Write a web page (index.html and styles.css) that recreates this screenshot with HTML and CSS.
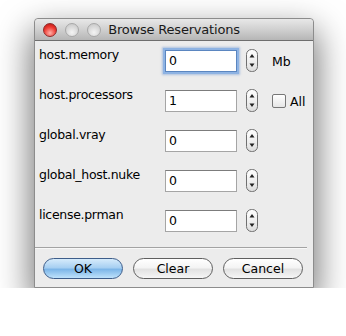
FILE: index.html
```html
<!DOCTYPE html>
<html lang="en">
<head>
    <meta charset="UTF-8">
    <meta name="viewport" content="width=device-width, initial-scale=1.0">
    <title>Browse Reservations</title>
    <link rel="stylesheet" href="styles.css">
</head>
<body>
    <div class="window">
        <div class="titlebar">
            <div class="lights">
                <span class="light light-close"></span>
                <span class="light"></span>
                <span class="light"></span>
            </div>
            <div class="title">Browse Reservations</div>
            <div></div>
        </div>

        <div class="content">
            <div class="row">
                <label class="name">host.memory</label>
                <input class="field field-focus" type="text" value="0">
                <span class="stepper">
                    <svg width="12" height="23" viewBox="0 0 12 23">
                        <defs>
                            <linearGradient id="stp" x1="0" y1="0" x2="0" y2="1">
                                <stop offset="0" stop-color="#ffffff"/>
                                <stop offset="0.5" stop-color="#f0f0f0"/>
                                <stop offset="1" stop-color="#dcdcdc"/>
                            </linearGradient>
                        </defs>
                        <rect x="0.5" y="0.5" width="11" height="22" rx="5" fill="url(#stp)" stroke="#6f6f6f"/>
                        <path d="M3.5 8.5 L6 5 L8.5 8.5 Z" fill="#222"/>
                        <path d="M3.5 14.5 L6 18 L8.5 14.5 Z" fill="#222"/>
                    </svg>
                </span>
                <span class="extra">Mb</span>
            </div>
            <div class="row">
                <label class="name">host.processors</label>
                <input class="field" type="text" value="1">
                <span class="stepper">
                    <svg width="12" height="23" viewBox="0 0 12 23">
                        <rect x="0.5" y="0.5" width="11" height="22" rx="5" fill="url(#stp)" stroke="#6f6f6f"/>
                        <path d="M3.5 8.5 L6 5 L8.5 8.5 Z" fill="#222"/>
                        <path d="M3.5 14.5 L6 18 L8.5 14.5 Z" fill="#222"/>
                    </svg>
                </span>
                <span class="extra"><span class="check"></span>All</span>
            </div>
            <div class="row">
                <label class="name">global.vray</label>
                <input class="field" type="text" value="0">
                <span class="stepper">
                    <svg width="12" height="23" viewBox="0 0 12 23">
                        <rect x="0.5" y="0.5" width="11" height="22" rx="5" fill="url(#stp)" stroke="#6f6f6f"/>
                        <path d="M3.5 8.5 L6 5 L8.5 8.5 Z" fill="#222"/>
                        <path d="M3.5 14.5 L6 18 L8.5 14.5 Z" fill="#222"/>
                    </svg>
                </span>
                <span class="extra"></span>
            </div>
            <div class="row">
                <label class="name">global_host.nuke</label>
                <input class="field" type="text" value="0">
                <span class="stepper">
                    <svg width="12" height="23" viewBox="0 0 12 23">
                        <rect x="0.5" y="0.5" width="11" height="22" rx="5" fill="url(#stp)" stroke="#6f6f6f"/>
                        <path d="M3.5 8.5 L6 5 L8.5 8.5 Z" fill="#222"/>
                        <path d="M3.5 14.5 L6 18 L8.5 14.5 Z" fill="#222"/>
                    </svg>
                </span>
                <span class="extra"></span>
            </div>
            <div class="row">
                <label class="name">license.prman</label>
                <input class="field" type="text" value="0">
                <span class="stepper">
                    <svg width="12" height="23" viewBox="0 0 12 23">
                        <rect x="0.5" y="0.5" width="11" height="22" rx="5" fill="url(#stp)" stroke="#6f6f6f"/>
                        <path d="M3.5 8.5 L6 5 L8.5 8.5 Z" fill="#222"/>
                        <path d="M3.5 14.5 L6 18 L8.5 14.5 Z" fill="#222"/>
                    </svg>
                </span>
                <span class="extra"></span>
            </div>
        </div>

        <div class="separator"></div>

        <div class="buttons">
            <button class="btn btn-default" type="button">OK</button>
            <button class="btn" type="button">Clear</button>
            <button class="btn" type="button">Cancel</button>
        </div>
    </div>
</body>
</html>
```

FILE: styles.css
```css
body {
    margin: 0;
    padding: 18px 0 0 34px;
    background: #ffffff;
    font-family: "DejaVu Sans", "Liberation Sans", sans-serif;
    font-size: 12px;
    color: #000;
}

.window {
    width: 278px;
    background: #ececec;
    border: 1px solid #8c8c8c;
    border-radius: 4px 4px 0 0;
    box-shadow: 0 15px 34px 3px rgba(0, 0, 0, 0.55);
}

.titlebar {
    height: 21px;
    display: grid;
    grid-template-columns: 1fr auto 1fr;
    align-items: center;
    background: linear-gradient(#e8e8e8, #d0d0d0 50%, #b6b6b6);
    border-bottom: 1px solid #6e6e6e;
    border-radius: 4px 4px 0 0;
}

.lights {
    display: flex;
    gap: 8px;
    padding-left: 8px;
}

.light {
    width: 12px;
    height: 12px;
    border-radius: 50%;
    border: 1px solid #a8a8a8;
    background: radial-gradient(circle at 50% 70%, #f4f4f4, #d6d6d6 60%, #c2c2c2);
}

.light-close {
    border-color: #8e2a2a;
    background: radial-gradient(circle at 50% 75%, #ffb0a8, #ee3a32 55%, #b3110c);
}

.title {
    font-size: 13px;
    color: #1a1a1a;
    letter-spacing: -0.2px;
}

.content {
    padding: 6px 0 0 4px;
}

.row {
    display: grid;
    grid-template-columns: 117px 72px 12px auto;
    column-gap: 9px;
    height: 40px;
}

.name {
    font-size: 12.5px;
    line-height: 16px;
    letter-spacing: -0.3px;
    white-space: nowrap;
}

.field {
    box-sizing: border-box;
    width: 72px;
    height: 22px;
    margin: 3px 0 0 0;
    padding: 0 3px 1px;
    border: 1px solid #a5a5a5;
    border-top-color: #7c7c7c;
    background: #fff;
    font-family: "DejaVu Sans", sans-serif;
    font-size: 12.5px;
    color: #000;
    outline: none;
}

.field-focus {
    border-color: #5b86c0;
    box-shadow: 0 0 0 2px #8eb3e3, 0 0 2px 3px rgba(110, 150, 210, 0.5);
}

.stepper {
    margin-top: 2px;
    height: 23px;
}

.stepper svg {
    display: block;
}

.extra {
    display: flex;
    align-items: center;
    gap: 4px;
    height: 22px;
    margin: 3px 0 0 5px;
    font-size: 12.5px;
}

.check {
    box-sizing: border-box;
    width: 14px;
    height: 14px;
    border: 1px solid #777;
    border-radius: 2px;
    background: linear-gradient(#ffffff, #e6e6e6);
}

.separator {
    height: 1px;
    margin: 0 6px 0 0;
    background: #a3a3a3;
    border-bottom: 1px solid #f8f8f8;
}

.buttons {
    display: flex;
    gap: 10px;
    padding: 9px 0 8px 8px;
}

.btn {
    width: 80px;
    height: 21px;
    padding: 0;
    border: 1px solid #5f5f5f;
    border-radius: 11px;
    background: linear-gradient(#ffffff, #f4f4f4 45%, #e2e2e2 55%, #f6f6f6);
    font-family: "DejaVu Sans", sans-serif;
    font-size: 12.5px;
    color: #000;
}

.btn-default {
    border-color: #3d5d8a;
    background: linear-gradient(#d6ebfb, #a8d0f2 45%, #7db6e8 55%, #bfe2fb);
}
```
